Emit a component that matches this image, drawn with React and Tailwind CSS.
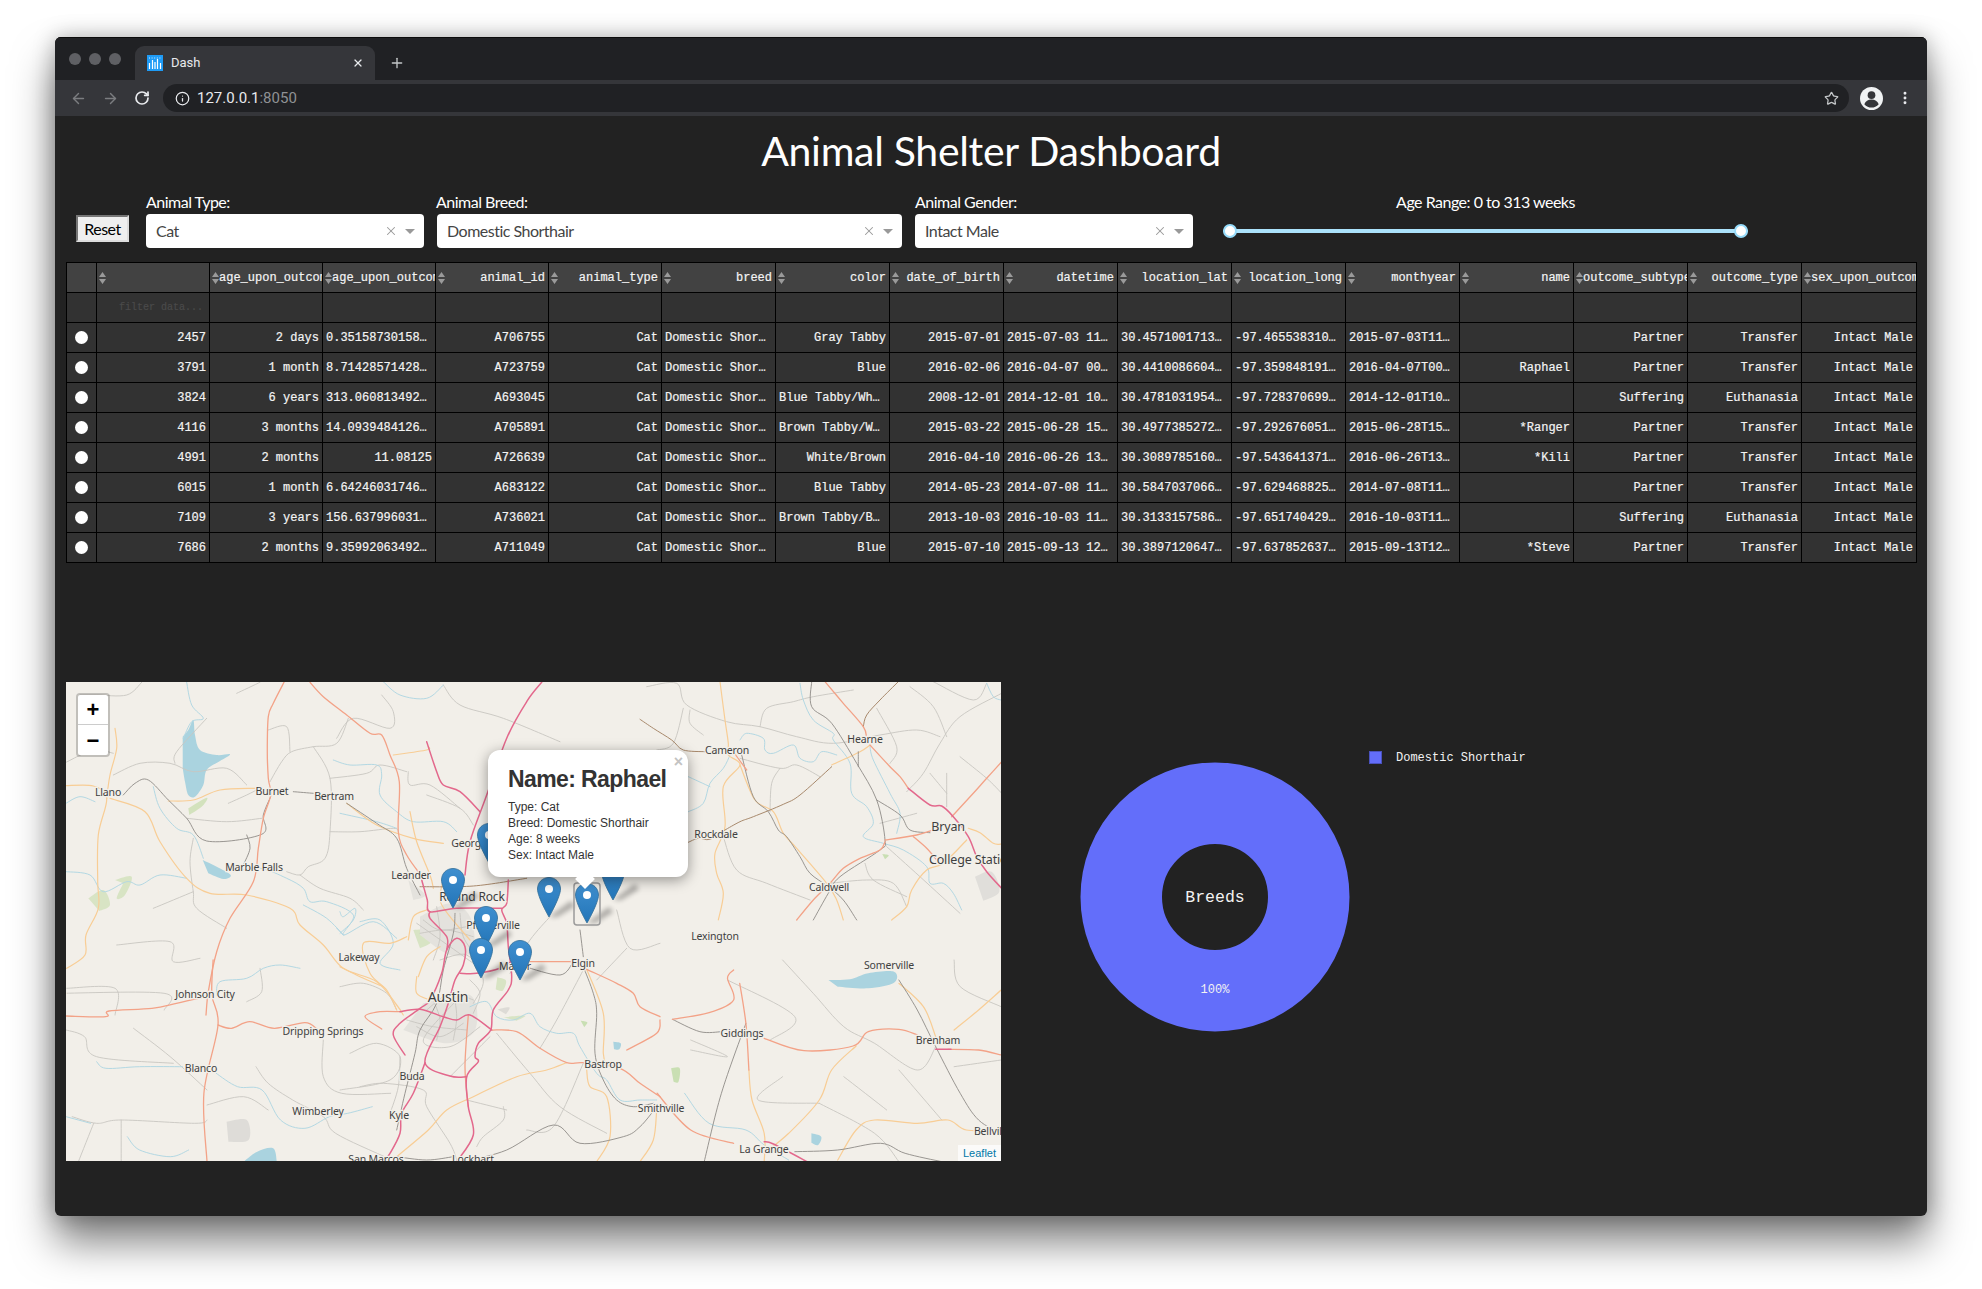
import React from 'react';
import { ArrowLeft, ArrowRight, RotateCw, Info, Star, EllipsisVertical, X, Plus } from 'lucide-react';

const headers = ['', 'age_upon_outcome', 'age_upon_outcome_in_weeks', 'animal_id', 'animal_type', 'breed', 'color', 'date_of_birth', 'datetime', 'location_lat', 'location_long', 'monthyear', 'name', 'outcome_subtype', 'outcome_type', 'sex_upon_outcome'];

const rows = [
  ['2457', '2 days', '0.35158730158…', 'A706755', 'Cat', 'Domestic Shor…', 'Gray Tabby', '2015-07-01', '2015-07-03 11…', '30.4571001713…', '-97.465538310…', '2015-07-03T11…', '', 'Partner', 'Transfer', 'Intact Male'],
  ['3791', '1 month', '8.71428571428…', 'A723759', 'Cat', 'Domestic Shor…', 'Blue', '2016-02-06', '2016-04-07 00…', '30.4410086604…', '-97.359848191…', '2016-04-07T00…', 'Raphael', 'Partner', 'Transfer', 'Intact Male'],
  ['3824', '6 years', '313.060813492…', 'A693045', 'Cat', 'Domestic Shor…', 'Blue Tabby/Wh…', '2008-12-01', '2014-12-01 10…', '30.4781031954…', '-97.728370699…', '2014-12-01T10…', '', 'Suffering', 'Euthanasia', 'Intact Male'],
  ['4116', '3 months', '14.0939484126…', 'A705891', 'Cat', 'Domestic Shor…', 'Brown Tabby/W…', '2015-03-22', '2015-06-28 15…', '30.4977385272…', '-97.292676051…', '2015-06-28T15…', '*Ranger', 'Partner', 'Transfer', 'Intact Male'],
  ['4991', '2 months', '11.08125', 'A726639', 'Cat', 'Domestic Shor…', 'White/Brown', '2016-04-10', '2016-06-26 13…', '30.3089785160…', '-97.543641371…', '2016-06-26T13…', '*Kili', 'Partner', 'Transfer', 'Intact Male'],
  ['6015', '1 month', '6.64246031746…', 'A683122', 'Cat', 'Domestic Shor…', 'Blue Tabby', '2014-05-23', '2014-07-08 11…', '30.5847037066…', '-97.629468825…', '2014-07-08T11…', '', 'Partner', 'Transfer', 'Intact Male'],
  ['7109', '3 years', '156.637996031…', 'A736021', 'Cat', 'Domestic Shor…', 'Brown Tabby/B…', '2013-10-03', '2016-10-03 11…', '30.3133157586…', '-97.651740429…', '2016-10-03T11…', '', 'Suffering', 'Euthanasia', 'Intact Male'],
  ['7686', '2 months', '9.35992063492…', 'A711049', 'Cat', 'Domestic Shor…', 'Blue', '2015-07-10', '2015-09-13 12…', '30.3897120647…', '-97.637852637…', '2015-09-13T12…', '*Steve', 'Partner', 'Transfer', 'Intact Male'],
];

const colWidths = [30, 113, 113, 113, 113, 113, 114, 114, 114, 114, 114, 114, 114, 114, 114, 114, 115];

// the traces were read off crops at different scales, so each has its own frame
const frames = {
  a: ([x, y]) => [x / 3 - 6, y / 3 - 7],
  b: ([x, y]) => [274 + x / 3, 198 + y / 3],
  c: ([x, y]) => [574 + x / 3, y / 3 - 2],
  d: ([x, y]) => [x / 1.633 - 6, 278 + y / 3],
};

const toPath = (frame, pts, close) => {
  const p = pts.split(' ').map((s) => frames[frame](s.split(',').map(Number)));
  let d = `M${p[0][0].toFixed(1)} ${p[0][1].toFixed(1)}`;
  for (let i = 0; i < p.length - 1; i++) {
    const p0 = p[i - 1] || p[i];
    const p1 = p[i];
    const p2 = p[i + 1];
    const p3 = p[i + 2] || p2;
    const c1 = [p1[0] + (p2[0] - p0[0]) / 6, p1[1] + (p2[1] - p0[1]) / 6];
    const c2 = [p2[0] - (p3[0] - p1[0]) / 6, p2[1] - (p3[1] - p1[1]) / 6];
    d += `C${c1[0].toFixed(1)} ${c1[1].toFixed(1)} ${c2[0].toFixed(1)} ${c2[1].toFixed(1)} ${p2[0].toFixed(1)} ${p2[1].toFixed(1)}`;
  }
  return close ? d + 'Z' : d;
};

const blobs = [
  ['#aad3df', 'a', '368,185 385,165 400,135 405,180 420,225 470,240 510,238 480,258 440,285 430,330 405,365 385,360 375,320 368,280'],
  ['#aad3df', 'a', '428,555 470,575 512,600 490,612 445,595'],
  ['#aad3df', 'd', '1255,60 1290,58 1320,40 1362,35 1362,68 1320,85 1270,80'],
  ['#aad3df', 'd', '300,605 322,575 348,565 354,605'],
  ['#aad3df', 'd', '1227,520 1243,530 1238,555 1227,548'],
  ['#aad3df', 'b', '820,485 842,490 838,508 822,508'],
  ['#d3e2bd', 'a', '385,400 440,368 428,392 388,420'],
  ['#d8e4c4', 'a', '165,615 215,605 195,660 170,670 190,625'],
  ['#d8e4c4', 'a', '85,670 130,645 150,690 118,708'],
  ['#d8e4c4', 'b', '220,150 265,152 275,185 240,205'],
  ['#d8e4c4', 'b', '472,292 498,302 488,332 467,328'],
  ['#c9dfb3', 'b', '722,422 742,427 733,442'],
  ['#c9dfb3', 'c', '727,522 746,526 735,538'],
  ['#c9dfb3', 'd', '998,325 1012,325 1010,365 1002,365'],
  ['#d8e4c4', 'b', '490,412 555,407 530,422'],
  ['#e4e2dd', 'b', '240,110 330,70 390,110 400,210 330,225 240,165'],
  ['#e4e2dd', 'b', '250,370 390,345 405,450 320,490 190,450'],
  ['#dddbd6', 'b', '472,388 508,382 498,403'],
  ['#e0deda', 'c', '1005,590 1055,575 1078,635 1030,662'],
  ['#dedcd8', 'd', '272,485 305,480 308,540 275,545'],
  ['#e4e2dd', 'a', '1045,615 1095,660 1060,675'],
];

const roads = [
  // grey roads
  ['g', 'a', '60,60 110,60 200,60 245,22'],
  ['g', 'a', '530,55 600,22'],
  ['g', 'a', '345,265 350,230 440,130'],
  ['g', 'a', '18,262 100,225 160,235'],
  ['g', 'a', '160,300 240,265 330,265 400,290 500,280 560,330'],
  ['g', 'a', '505,385 560,360 600,340'],
  ['g', 'a', '380,430 500,440 605,430'],
  ['g', 'a', '630,320 665,260 695,230 760,215 830,205 865,130'],
  ['g', 'a', '690,230 680,155 625,165'],
  ['g', 'a', '760,215 810,310 810,470 795,550 745,575 720,600 680,590'],
  ['g', 'a', '810,310 920,295 960,270 1040,290'],
  ['g', 'a', '810,470 900,470 1000,460 1015,470'],
  ['g', 'a', '400,490 390,560 400,650 410,700 500,760'],
  ['g', 'a', '280,700 400,650'],
  ['g', 'a', '720,600 780,640 870,670 910,705'],
  ['g', 'a', '170,810 330,800 340,860 420,850'],
  ['g', 'a', '20,940 165,940 165,1020'],
  ['g', 'a', '600,880 605,950 560,980'],
  ['g', 'a', '1100,360 1200,400 1240,450'],
  ['g', 'a', '1045,290 1050,330 1110,330 1200,400'],
  ['g', 'a', '965,60 1000,110 990,160 880,130 830,190'],
  ['g', 'a', '1150,30 1200,90 1330,130 1500,200'],
  ['g', 'c', '20,20 110,10 140,75 260,125 360,140 470,170 580,190 720,165 830,150 900,170'],
  ['g', 'c', '360,140 380,85 460,65 520,50 640,30'],
  ['g', 'c', '130,85 100,190 50,210'],
  ['g', 'c', '150,90 150,130 190,165'],
  ['g', 'c', '300,235 420,265 470,255 540,290'],
  ['g', 'c', '420,265 395,310 390,395'],
  ['g', 'c', '800,335 850,280 900,190 960,110 1085,40'],
  ['g', 'c', '880,5 1000,60 1040,10'],
  ['g', 'c', '710,85 770,200 750,250'],
  ['g', 'c', '920,170 880,80 810,20'],
  ['g', 'c', '960,230 1040,295 1085,340'],
  ['g', 'c', '870,280 920,340'],
  ['g', 'c', '920,280 920,380'],
  ['g', 'c', '250,470 290,570 380,610 510,660'],
  ['g', 'c', '570,610 680,600 760,610 800,680'],
  ['g', 'c', '740,500 840,590 960,700'],
  ['g', 'c', '675,550 700,600 800,650'],
  ['g', 'c', '720,430 830,400'],
  ['g', 'b', '730,270 650,420 600,505'],
  ['g', 'b', '860,205 770,300'],
  ['g', 'b', '630,110 570,180 510,280'],
  ['g', 'b', '830,90 870,205 960,190'],
  ['g', 'b', '470,460 570,580 660,680 800,760'],
  ['g', 'b', '730,550 640,740 560,750'],
  ['g', 'b', '450,470 330,590'],
  ['g', 'b', '30,520 110,490 180,530 150,600 0,630'],
  ['g', 'b', '180,530 175,620 150,700'],
  ['g', 'b', '0,320 70,310 140,340 170,390'],
  ['g', 'b', '60,620 130,610 250,630 260,680 330,790 350,840'],
  ['g', 'b', '490,680 490,720 430,770 410,800'],
  ['g', 'b', '500,690 380,660'],
  ['g', 'b', '300,240 380,225 430,300 400,370'],
  ['g', 'b', '230,130 330,200 400,250'],
  ['g', 'b', '350,360 250,480 330,500 420,440'],
  // streets of the built-up areas
  ['g', 'b', '250,120 300,150 380,140'],
  ['g', 'b', '290,80 300,170 280,240'],
  ['g', 'b', '360,100 370,170 410,230'],
  ['g', 'b', '240,160 320,150 400,170'],
  ['g', 'b', '260,390 330,340 400,360'],
  ['g', 'b', '280,360 300,420 290,480'],
  ['g', 'b', '340,330 350,410 340,480'],
  ['g', 'b', '200,420 280,440 380,450'],
  ['g', 'b', '230,440 300,470 370,430'],
  ['g', 'b', '390,300 420,340 400,400'],
  ['g', 'd', '10,210 40,230 60,290 185,310'],
  ['g', 'd', '120,205 180,290 240,390'],
  ['g', 'd', '320,320 340,370 380,420 430,470 450,520 530,590'],
  ['g', 'd', '430,240 430,350 460,400 540,400'],
  ['g', 'd', '240,435 300,410 340,450'],
  ['g', 'd', '20,470 60,490 100,480 220,490 240,480'],
  ['g', 'd', '100,480 100,605'],
  ['g', 'd', '55,490 30,605'],
  ['g', 'd', '0,100 170,100 170,150'],
  ['g', 'd', '1180,0 1230,100 1280,200 1330,250 1400,330 1430,260'],
  ['g', 'd', '1240,430 1330,520 1370,605'],
  ['g', 'd', '1090,60 1200,170 1160,240'],
  ['g', 'd', '1030,240 1090,290 1030,270'],
  ['g', 'd', '1280,350 1350,450'],
  ['g', 'd', '1370,330 1440,480'],
  ['g', 'd', '1460,0 1470,80 1537,140'],
  ['g', 'd', '1180,350 1140,420 1240,430'],
  ['g', 'd', '1460,320 1537,300'],
  // water
  ['w', 'a', '380,22 395,90 430,130 395,140 370,190'],
  ['w', 'a', '820,255 870,270 950,270 965,300 960,360 1010,410 1060,440 1150,440 1190,470'],
  ['w', 'a', '280,335 300,400 350,460 400,480 430,550'],
  ['w', 'a', '18,590 90,600 130,650 200,620 240,630 300,600 380,610'],
  ['w', 'a', '520,590 600,580 680,610 730,640 750,680 800,680 880,720 850,780 940,740 1010,790'],
  ['w', 'a', '730,690 800,730 850,780 830,760'],
  ['w', 'a', '970,20 1020,60 1100,70 1150,30'],
  ['w', 'a', '840,415 950,440 1010,460'],
  ['w', 'a', '18,385 60,365 105,380'],
  ['w', 'a', '720,880 660,870 610,880 560,910 480,920 470,960'],
  ['w', 'b', '390,380 440,365 470,410 520,420 570,400 600,440 650,460 700,460 720,500 770,580 800,600 840,660 900,660 950,660'],
  ['w', 'b', '0,160 40,120 45,85 10,110 0,95'],
  ['w', 'b', '60,125 120,120 160,190 120,250 180,270'],
  ['w', 'c', '480,10 490,60 520,120 580,160 580,180 630,250 635,340 680,380 700,430 670,470 730,490 790,510 860,560 870,610 910,610 940,640 965,690'],
  ['w', 'c', '300,180 320,160 370,175 375,210 400,220 460,195 480,235 520,245 545,215 590,225'],
  ['w', 'c', '270,225 250,265 210,310 190,370 145,395'],
  ['w', 'c', '690,200 700,240 750,340 780,400 770,460'],
  ['w', 'c', '1040,10 1060,50 1083,60'],
  ['w', 'c', '145,290 210,320'],
  ['w', 'd', '60,305 75,325 130,320 200,320'],
  ['w', 'd', '255,340 290,380 330,390 360,480 400,505 440,470 470,460 510,440'],
  ['w', 'd', '10,470 50,490'],
  ['w', 'd', '110,530 130,570 180,590 210,570'],
  ['w', 'd', '1020,400 1060,490 1120,510 1150,555 1190,600'],
  // secondary
  ['s', 'a', '18,332 100,333 140,370 115,480 113,620 115,700 78,780 75,840 20,880'],
  ['s', 'a', '150,370 255,410 300,500 380,610 450,655 560,660 690,700 720,750 790,810 850,880 950,920 1010,990 1030,1020'],
  ['s', 'a', '165,160 170,220 150,300 140,370'],
  ['s', 'a', '325,378 400,375 480,345 585,340'],
  ['s', 'a', '1000,240 1100,225 1105,215'],
  ['s', 'a', '1050,410 1070,500 1110,600 1120,640'],
  ['s', 'a', '860,385 950,450 1060,490 1150,505'],
  ['s', 'c', '240,5 255,120 265,190 265,225 300,255 250,320 255,440 225,520 230,580 250,640 235,720'],
  ['s', 'c', '300,255 345,360 400,395 430,460 470,505 560,610 590,660 610,720'],
  ['s', 'c', '575,255 660,215 690,195'],
  ['s', 'c', '985,445 1020,458 1060,490 1085,492'],
  ['s', 'c', '980,480 910,550 860,570 815,630 800,680 755,720'],
  ['s', 'b', '680,548 620,570 530,590 400,650 320,690 265,750 170,830'],
  ['s', 'b', '740,570 750,620 800,650 810,770 770,845'],
  ['s', 'b', '740,268 790,400 790,520 800,560'],
  ['s', 'b', '230,290 230,340 270,360'],
  ['s', 'b', '200,170 150,190 70,190 90,280 140,330 170,390'],
  ['s', 'b', '205,180 220,110 260,90'],
  ['s', 'b', '0,260 60,290 130,320'],
  ['s', 'b', '300,200 260,230 235,290'],
  ['s', 'b', '310,0 300,60 330,110 390,180'],
  ['s', 'b', '950,690 940,780 900,845'],
  ['s', 'd', '1300,258 1260,330 1240,420 1190,520 1150,580'],
  ['s', 'd', '1270,600 1300,510 1330,480 1400,490 1450,480 1480,510 1537,510'],
  ['s', 'd', '1125,330 1130,420 1150,520 1150,605'],
  ['s', 'd', '1460,210 1500,150 1537,90'],
  ['s', 'd', '1370,70 1410,140 1430,230'],
  // rail and dark roads
  ['r', 'a', '190,360 225,325 265,315 325,375 380,430 440,498 605,478 610,420 632,365'],
  ['r', 'a', '700,350 760,355'],
  ['r', 'a', '860,385 950,445 1010,490 1040,580 1080,660'],
  ['r', 'a', '560,480 570,520 550,570'],
  ['r', 'c', '515,5 515,80 575,130 650,250 710,360 735,480 720,510 600,590 565,640 520,720'],
  ['r', 'c', '305,225 340,350 385,395 415,450 440,470 480,530 510,580 565,620 610,660 650,720'],
  ['r', 'c', '710,360 780,405 810,450 870,458'],
  ['r', 'c', '655,215 655,260'],
  ['r', 'b', '345,100 340,160 310,270 290,370 240,450 225,520 195,640 170,750'],
  ['r', 'b', '730,260 760,340 770,400 765,520 790,600 830,660 880,680 940,670'],
  ['r', 'b', '720,150 730,230'],
  ['r', 'b', '390,840 500,810 640,735 720,790 850,770 900,740 950,680'],
  ['r', 'b', '170,830 260,840 340,830'],
  ['r', 'b', '555,260 660,285 700,245'],
  ['r', 'd', '1000,178 1045,215 1080,215'],
  ['r', 'd', '1120,190 1080,400 1052,605'],
  ['r', 'd', '1370,60 1400,150 1430,260 1470,400 1500,480 1537,520'],
  ['r', 'd', '1200,575 1270,570 1340,550 1380,580 1440,605'],
  // brown
  ['n', 'c', '0,118 40,145 95,180 130,210 195,215'],
  ['n', 'c', '775,5 720,60 680,105 670,140'],
  ['n', 'c', '255,450 300,425 340,410 430,373 480,345 575,260'],
  ['n', 'c', '145,487 175,475 210,478 255,450'],
  ['n', 'b', '240,20 400,18 560,-5'],
  // primary
  ['p', 'a', '672,22 640,85 625,125 622,230 625,310 632,360 610,430 595,520 580,620 510,730 470,830 445,950 438,1020'],
  ['p', 'a', '750,22 790,65 860,120 930,175 965,180 990,240 1018,320 1015,470 1040,540 1090,610'],
  ['p', 'c', '555,5 610,70 670,140 680,175'],
  ['p', 'c', '690,195 750,260 780,290 805,325'],
  ['p', 'c', '735,480 830,465 880,450'],
  ['p', 'c', '735,485 720,510 660,535 610,565 570,610 520,660 470,720'],
  ['p', 'c', '820,470 860,505 890,540'],
  ['p', 'c', '935,410 1000,340 1040,295 1085,245'],
  ['p', 'c', '285,222 320,270'],
  ['p', 'b', '455,450 530,455 600,505 680,548 730,548 840,565 900,610 960,650'],
  ['p', 'b', '125,447 75,410 120,395 180,395'],
  ['p', 'b', '740,268 830,310 880,340 900,380 960,410'],
  ['p', 'b', '570,245 700,245'],
  ['p', 'b', '860,510 950,460 960,420'],
  ['p', 'b', '385,405 375,560 385,680'],
  ['p', 'd', '10,168 75,170 80,153 150,145 190,130 248,105'],
  ['p', 'd', '250,0 248,105 258,195 235,400 240,605'],
  ['p', 'd', '258,195 280,205 310,185 350,205 400,188 420,208'],
  ['p', 'd', '1000,178 1060,158 1100,120 1090,55 1100,30'],
  ['p', 'd', '1110,70 1120,190 1125,330'],
  ['p', 'd', '1150,235 1215,272 1295,258 1320,215 1370,208 1400,225'],
  ['p', 'd', '1450,268 1500,270 1537,285'],
  ['p', 'd', '975,400 1030,510 1100,550'],
  // motorways
  ['m', 'a', '1100,200 1130,290 1150,330 1200,350 1260,410'],
  ['m', 'a', '1445,22 1400,80 1340,190 1280,360 1230,500 1215,600'],
  ['m', 'b', '505,0 500,70 485,90 500,130 505,200 515,290 505,330 460,390 452,450 415,490 405,530 415,545 380,590 385,680 400,765 350,845'],
  ['m', 'b', '245,0 262,60 270,95 350,85 485,85'],
  ['m', 'b', '380,590 330,588 255,548 300,440 325,370 345,300 370,255 375,200 350,175 320,210 305,280 270,360 240,385 180,430 160,465 195,525'],
  ['m', 'b', '180,395 240,388 310,410 350,420 390,405 455,450'],
  ['m', 'b', '360,280 410,280 480,265 520,240'],
  ['m', 'b', '255,548 220,640 185,700 180,760 150,820 130,845'],
  ['m', 'b', '270,95 270,115 320,170 320,210'],
  ['m', 'c', '805,325 870,375 905,378 940,410 985,470 1010,530 1040,575 1085,625'],
  ['m', 'd', '1150,545 1165,552 1220,605'],
  ['m', 'd', '1430,268 1455,268'],
];

const roadStyle = {
  g: { stroke: '#c8c6c1', strokeWidth: 0.9 },
  w: { stroke: '#b3d8e3', strokeWidth: 1 },
  s: { stroke: '#f8cd95', strokeWidth: 1.2 },
  r: { stroke: '#8e8b87', strokeWidth: 0.9 },
  n: { stroke: '#a8896c', strokeWidth: 1 },
  p: { stroke: '#f3a287', strokeWidth: 1.3 },
  m: { stroke: '#e3688c', strokeWidth: 1.5 },
};

const places = [
  ['Llano', 42, 110, 10.5], ['Burnet', 206, 109, 10.5], ['Bertram', 268, 114, 10.5], ['Marble Falls', 188, 185, 10.5],
  ['Leander', 345, 193, 10.5], ['Georgetown', 415, 161, 10.5], ['Round Rock', 406, 214, 12], ['Pflugerville', 427, 243, 10.5],
  ['Lakeway', 293, 275, 10.5], ['Manor', 449, 284, 10.5], ['Johnson City', 139, 312, 10.5], ['Austin', 382, 314, 14],
  ['Cameron', 661, 68, 10.5], ['Hearne', 799, 57, 10.5], ['Rockdale', 650, 152, 10.5], ['Bryan', 882, 144, 12.5],
  ['College Station', 906, 177, 12.5], ['Caldwell', 763, 205, 10.5], ['Lexington', 649, 254, 10.5], ['Elgin', 517, 281, 10.5],
  ['Somerville', 823, 283, 10.5], ['Giddings', 676, 351, 10.5], ['Brenham', 872, 358, 10.5], ['Dripping Springs', 257, 349, 10.5],
  ['Blanco', 135, 386, 10.5], ['Buda', 346, 394, 10.5], ['Wimberley', 252, 429, 10.5], ['Kyle', 333, 433, 10.5],
  ['San Marcos', 310, 477, 10.5], ['Lockhart', 407, 477, 10.5], ['Bastrop', 537, 382, 10.5], ['Smithville', 595, 426, 10.5],
  ['La Grange', 698, 467, 10.5], ['Bellville', 926, 449, 10.5], ['Fredericksburg', -36, 313, 10.5],
];

// tip of each pin, in map pixels, back to front
const pins = [[423, 181], [547, 218], [387, 226], [420, 264], [483, 235], [415, 296], [454, 298], [521, 241]];

const Pin = ({ x, y }) => (
  <g transform={`translate(${x - 12} ${y - 40})`}>
    <path d="M12 40 L34 24 L38 29 L20 40Z" fill="#000" opacity="0.3" filter="url(#pin-shadow)" />
    <path d="M12 0.5C5.5.5.5 5.5.5 12 .5 20 12 40 12 40S23.5 20 23.5 12C23.5 5.5 18.5.5 12 .5z" fill="url(#pin-fill)" stroke="#2e6c97" strokeWidth="0.8" />
    <circle cx="12" cy="12" r="4" fill="#fff" />
  </g>
);

const MapCanvas = () => (
  <svg className="absolute inset-0 w-full h-full" viewBox="0 0 935 479">
    <defs>
      <linearGradient id="pin-fill" x1="0" y1="0" x2="0" y2="1">
        <stop offset="0" stopColor="#3f8fcf" />
        <stop offset="1" stopColor="#2375b8" />
      </linearGradient>
      <filter id="pin-shadow" x="-50%" y="-50%" width="200%" height="200%">
        <feGaussianBlur stdDeviation="2.5" />
      </filter>
    </defs>
    {blobs.map(([fill, frame, pts], i) => (
      <path key={i} d={toPath(frame, pts, true)} fill={fill} />
    ))}
    <g fill="none" strokeLinecap="round" strokeLinejoin="round">
      {roads.map(([kind, frame, pts], i) => (
        <path key={i} d={toPath(frame, pts)} {...roadStyle[kind]} />
      ))}
    </g>
    <g fill="#3f3f3f" textAnchor="middle" dominantBaseline="central" stroke="#f2efe9" strokeWidth="2.5" paintOrder="stroke" letterSpacing="-0.15" fontFamily="'Noto Sans', sans-serif">
      {places.map(([name, x, y, size]) => (
        <text key={name} x={x} y={y} fontSize={size}>{name}</text>
      ))}
    </g>
    {pins.map(([x, y]) => <Pin key={x} x={x} y={y} />)}
    <rect x="508" y="201" width="26" height="42" rx="3" fill="none" stroke="#9b9b9b" strokeWidth="1.5" />
  </svg>
);

const SortArrows = () => (
  <svg className="shrink-0 w-[7px] h-[12px]" viewBox="0 0 7 12">
    <path d="M3.5 0L7 5H0Z M3.5 12L0 7H7Z" fill="#9a9a9a" />
  </svg>
);

const Dropdown = ({ value, className }) => (
  <div className={`flex items-center h-[34px] bg-white rounded-[4px] pl-[10px] pr-[9px] ${className}`}>
    <span className="flex-1 text-[16px] tracking-[-0.5px] text-[#444]">{value}</span>
    <X className="w-[14px] h-[14px] text-[#999] mr-[7px]" strokeWidth={1.8} />
    <span className="w-0 h-0 border-x-[5px] border-x-transparent border-t-[5px] border-t-[#999]" />
  </div>
);

const Favicon = () => (
  <svg className="w-[16px] h-[16px] shrink-0" viewBox="0 0 16 16">
    <rect width="16" height="16" fill="#1e9bf5" />
    <path d="M2.5 8v6 M5.5 5v9 M8 7v7 M10.5 4v10 M13.5 8v6" stroke="#fff" strokeWidth="1.2" />
    <path d="M2 3h12" stroke="#fff" strokeWidth="0.8" strokeDasharray="1 1.6" />
  </svg>
);

const App = () => (
  <div className="w-[1982px] h-[1289px] bg-white overflow-hidden pt-[37px] pl-[55px] font-['Lato',sans-serif]">
    <div className="w-[1872px] h-[1179px] rounded-[6px] overflow-hidden bg-[#222222] shadow-[0_26px_42px_rgba(0,0,0,0.5),0_0_22px_rgba(0,0,0,0.28)]">
      {/* tab strip */}
      <div className="h-[43px] bg-[#202124] border-t border-t-[#0c0c0c] flex items-end">
        <div className="flex gap-[8px] pl-[14px] pb-[15px]">
          <span className="w-[12px] h-[12px] rounded-full bg-[#5f6064]" />
          <span className="w-[12px] h-[12px] rounded-full bg-[#5f6064]" />
          <span className="w-[12px] h-[12px] rounded-full bg-[#5f6064]" />
        </div>
        <div className="ml-[14px] w-[240px] h-[34px] bg-[#35363a] rounded-t-[9px] flex items-center pl-[12px] pr-[11px]">
          <Favicon />
          <span className="ml-[8px] flex-1 text-[13px] text-[#e8eaed] font-['Roboto',sans-serif]">Dash</span>
          <X className="w-[12px] h-[12px] text-[#e8eaed]" strokeWidth={2.4} />
        </div>
        <Plus className="ml-[14px] mb-[9px] w-[16px] h-[16px] text-[#c4c7c9]" strokeWidth={2} />
      </div>
      {/* toolbar */}
      <div className="h-[36px] bg-[#35363a] flex items-center">
        <ArrowLeft className="ml-[15px] w-[17px] h-[17px] text-[#7b7d80]" strokeWidth={2} />
        <ArrowRight className="ml-[15px] w-[17px] h-[17px] text-[#7b7d80]" strokeWidth={2} />
        <RotateCw className="ml-[15px] w-[16px] h-[16px] text-[#e8eaed]" strokeWidth={2.6} />
        <div className="ml-[13px] w-[1686px] h-[28px] rounded-full bg-[#202124] flex items-center pl-[12px] pr-[10px]">
          <Info className="w-[15px] h-[15px] text-[#e8eaed]" strokeWidth={2} />
          <span className="ml-[7px] flex-1 text-[15px] text-[#e8eaed] font-['Roboto',sans-serif]">
            127.0.0.1<span className="text-[#8f9194]">:8050</span>
          </span>
          <Star className="w-[15px] h-[15px] text-[#c4c7c9]" strokeWidth={2} />
        </div>
        <svg className="ml-[11px] w-[23px] h-[23px]" viewBox="0 0 24 24">
          <circle cx="12" cy="12" r="12" fill="#f1f3f4" />
          <circle cx="12" cy="8.5" r="4" fill="#35363a" />
          <path d="M4.5 18c1-3.5 4-5 7.5-5s6.5 1.5 7.5 5c-2 2.3-4.7 3.5-7.5 3.5S6.5 20.3 4.5 18z" fill="#35363a" />
        </svg>
        <EllipsisVertical className="ml-[14px] w-[16px] h-[16px] text-[#e8eaed]" strokeWidth={2.4} />
      </div>

      {/* dashboard */}
      <h1 className="h-[74px] pb-[6px] flex items-center justify-center text-[41px] tracking-[-0.3px] leading-none text-white">Animal Shelter Dashboard</h1>

      <div className="flex items-end pl-[21px] text-white text-[16px] tracking-[-0.5px]">
        <button className="w-[53px] h-[27px] mb-[6px] mr-[17px] bg-[#efefef] text-black text-[16px] border-2 border-t-[#767676] border-l-[#767676] border-r-[#dddddd] border-b-[#dddddd]">Reset</button>
        <div className="w-[278px] mr-[13px]">
          <div className="h-[24px] leading-[24px]">Animal Type:</div>
          <Dropdown value="Cat" />
        </div>
        <div className="w-[465px] mr-[13px]">
          <div className="h-[24px] leading-[24px] -ml-[1px]">Animal Breed:</div>
          <Dropdown value="Domestic Shorthair" />
        </div>
        <div className="w-[278px] mr-[30px]">
          <div className="h-[24px] leading-[24px]">Animal Gender:</div>
          <Dropdown value="Intact Male" />
        </div>
        <div className="w-[525px]">
          <div className="h-[24px] leading-[24px] text-center">Age Range: 0 to 313 weeks</div>
          <div className="h-[34px] flex items-center relative">
            <div className="h-[4px] w-full bg-[#abe2fb] rounded-full" />
            <span className="absolute left-0 w-[14px] h-[14px] rounded-full bg-white border-2 border-[#96dbfa]" />
            <span className="absolute right-0 w-[14px] h-[14px] rounded-full bg-white border-2 border-[#96dbfa]" />
          </div>
        </div>
      </div>

      <table className="mt-[14px] ml-[11px] w-[1850px] table-fixed border-collapse font-['Liberation_Mono',monospace] text-[12px] text-[#f4f4f4] [-webkit-text-stroke:0.2px]">
        <colgroup>
          {colWidths.map((w, i) => <col key={i} style={{ width: w }} />)}
        </colgroup>
        <thead>
          <tr className="h-[30px] bg-[#424242]">
            <th className="border border-black" />
            {headers.map((h, i) => (
              <th key={i} className="border border-black pl-[2px] pr-[3px] overflow-hidden font-normal">
                <div className="flex items-center justify-between">
                  <SortArrows />
                  <span className="shrink-0 whitespace-nowrap">{h}</span>
                </div>
              </th>
            ))}
          </tr>
          <tr className="h-[30px] bg-[#323232]">
            <th className="border border-black" />
            {headers.map((h, i) => (
              <th key={i} className="border border-black pr-[6px] text-right font-normal text-[10px] text-[#4a4a4a]">{i === 0 ? 'filter data...' : ''}</th>
            ))}
          </tr>
        </thead>
        <tbody>
          {rows.map((row) => (
            <tr key={row[0]} className="h-[30px] bg-[#323232]">
              <td className="border border-black">
                <span className="block mx-auto w-[13px] h-[13px] rounded-full bg-white" />
              </td>
              {row.map((cell, i) => (
                <td key={i} className={`border border-black px-[3px] pt-[1px] whitespace-nowrap overflow-hidden ${cell.endsWith('…') ? 'text-left' : 'text-right'}`}>{cell}</td>
              ))}
            </tr>
          ))}
        </tbody>
      </table>

      <div className="mt-[119px] ml-[11px] flex">
        <div className="relative w-[935px] h-[479px] bg-[#f2efe9] overflow-hidden font-['Liberation_Sans',sans-serif]">
          <MapCanvas />

          {/* zoom control */}
          <div className="absolute left-[10px] top-[11px] w-[34px] border-2 border-black/20 rounded-[4px] bg-white bg-clip-padding">
            <div className="h-[30px] flex items-center justify-center border-b border-[#ccc] text-[22px] font-bold text-black">+</div>
            <div className="h-[30px] flex items-center justify-center text-[22px] font-bold text-black">−</div>
          </div>

          {/* popup */}
          <div className="absolute left-[422px] top-[68px] w-[200px] h-[127px] bg-white rounded-[12px] pl-[20px] pt-[16px] text-[#333] shadow-[0_3px_14px_rgba(0,0,0,0.4)]">
            <span className="absolute right-[5px] top-[2px] text-[16px] font-bold leading-[20px] text-[#c3c3c3]">×</span>
            <div className="text-[23px] leading-[26px] font-bold tracking-[-0.6px] whitespace-nowrap">Name: Raphael</div>
            <div className="mt-[7px] text-[12px] leading-[16px]">
              <div>Type: Cat</div>
              <div>Breed: Domestic Shorthair</div>
              <div>Age: 8 weeks</div>
              <div>Sex: Intact Male</div>
            </div>
            <span className="absolute left-[90px] top-[122px] w-[14px] h-[14px] rotate-45 bg-white" />
          </div>

          <div className="absolute right-0 bottom-0 px-[5px] bg-white/70 text-[11px] leading-[16px] text-[#0078a8]">Leaflet</div>
        </div>

        {/* donut chart */}
        <svg className="w-[915px] h-[479px] font-['Liberation_Mono',monospace]" viewBox="0 0 915 479">
          <circle cx="214" cy="215" r="93.75" fill="none" stroke="#636efa" strokeWidth="81.5" />
          <text x="214" y="215" fill="#f2f2f2" fontSize="16.5" textAnchor="middle" dominantBaseline="central">Breeds</text>
          <text x="214" y="308" fill="#f2f2f2" fontSize="12" textAnchor="middle" dominantBaseline="central">100%</text>
          <rect x="368.5" y="69.5" width="12" height="12" fill="#636efa" stroke="#4a52bd" />
          <text x="395" y="76" fill="#f2f2f2" fontSize="12" dominantBaseline="central">Domestic Shorthair</text>
        </svg>
      </div>
    </div>
  </div>
);

export default App;
